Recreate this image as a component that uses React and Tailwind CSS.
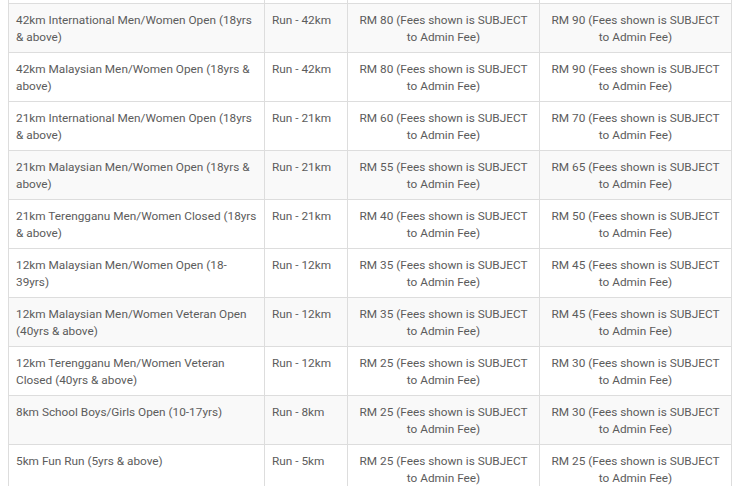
const rows = [
  { name: '42km International Men/Women Open (18yrs & above)', cat: 'Run - 42km', early: 80, normal: 90, shade: true },
  { name: '42km Malaysian Men/Women Open (18yrs & above)', cat: 'Run - 42km', early: 80, normal: 90 },
  { name: '21km International Men/Women Open (18yrs & above)', cat: 'Run - 21km', early: 60, normal: 70 },
  { name: '21km Malaysian Men/Women Open (18yrs & above)', cat: 'Run - 21km', early: 55, normal: 65, shade: true },
  { name: '21km Terengganu Men/Women Closed (18yrs & above)', cat: 'Run - 21km', early: 40, normal: 50 },
  { name: '12km Malaysian Men/Women Open (18-39yrs)', cat: 'Run - 12km', early: 35, normal: 45 },
  { name: '12km Malaysian Men/Women Veteran Open (40yrs & above)', cat: 'Run - 12km', early: 35, normal: 45, shade: true },
  { name: '12km Terengganu Men/Women Veteran Closed (40yrs & above)', cat: 'Run - 12km', early: 25, normal: 30 },
  { name: '8km School Boys/Girls Open (10-17yrs)', cat: 'Run - 8km', early: 25, normal: 30, shade: true },
  { name: '5km Fun Run (5yrs & above)', cat: 'Run - 5km', early: 25, normal: 25 },
];

const cell = 'border border-[#dddddd] align-top px-[7px] pt-[8px] pb-[6px]';

export default function App() {
  return (
    <div className="w-[741px] h-[486px] overflow-hidden bg-white font-['Roboto',sans-serif] text-[11.8px] leading-[17px] text-[#5c5c5c]">
      <table className="ml-[8px] w-[723px] table-fixed border-collapse">
        <colgroup>
          <col className="w-[256px]" />
          <col className="w-[83px]" />
          <col className="w-[192px]" />
          <col className="w-[192px]" />
        </colgroup>
        <tbody>
          <tr className="h-[3px]">
            <td className="border-x border-[#dddddd]" />
            <td className="border-x border-[#dddddd]" />
            <td className="border-x border-[#dddddd]" />
            <td className="border-x border-[#dddddd]" />
          </tr>
          {rows.map((r) => (
            <tr key={r.name} className={`h-[49px] ${r.shade ? 'bg-[#f9f9f9]' : 'bg-white'}`}>
              <td className={cell}>{r.name}</td>
              <td className={cell}>{r.cat}</td>
              <td className={`${cell} text-center`}>RM {r.early} (Fees shown is SUBJECT to Admin Fee)</td>
              <td className={`${cell} text-center`}>RM {r.normal} (Fees shown is SUBJECT to Admin Fee)</td>
            </tr>
          ))}
        </tbody>
      </table>
    </div>
  );
}
